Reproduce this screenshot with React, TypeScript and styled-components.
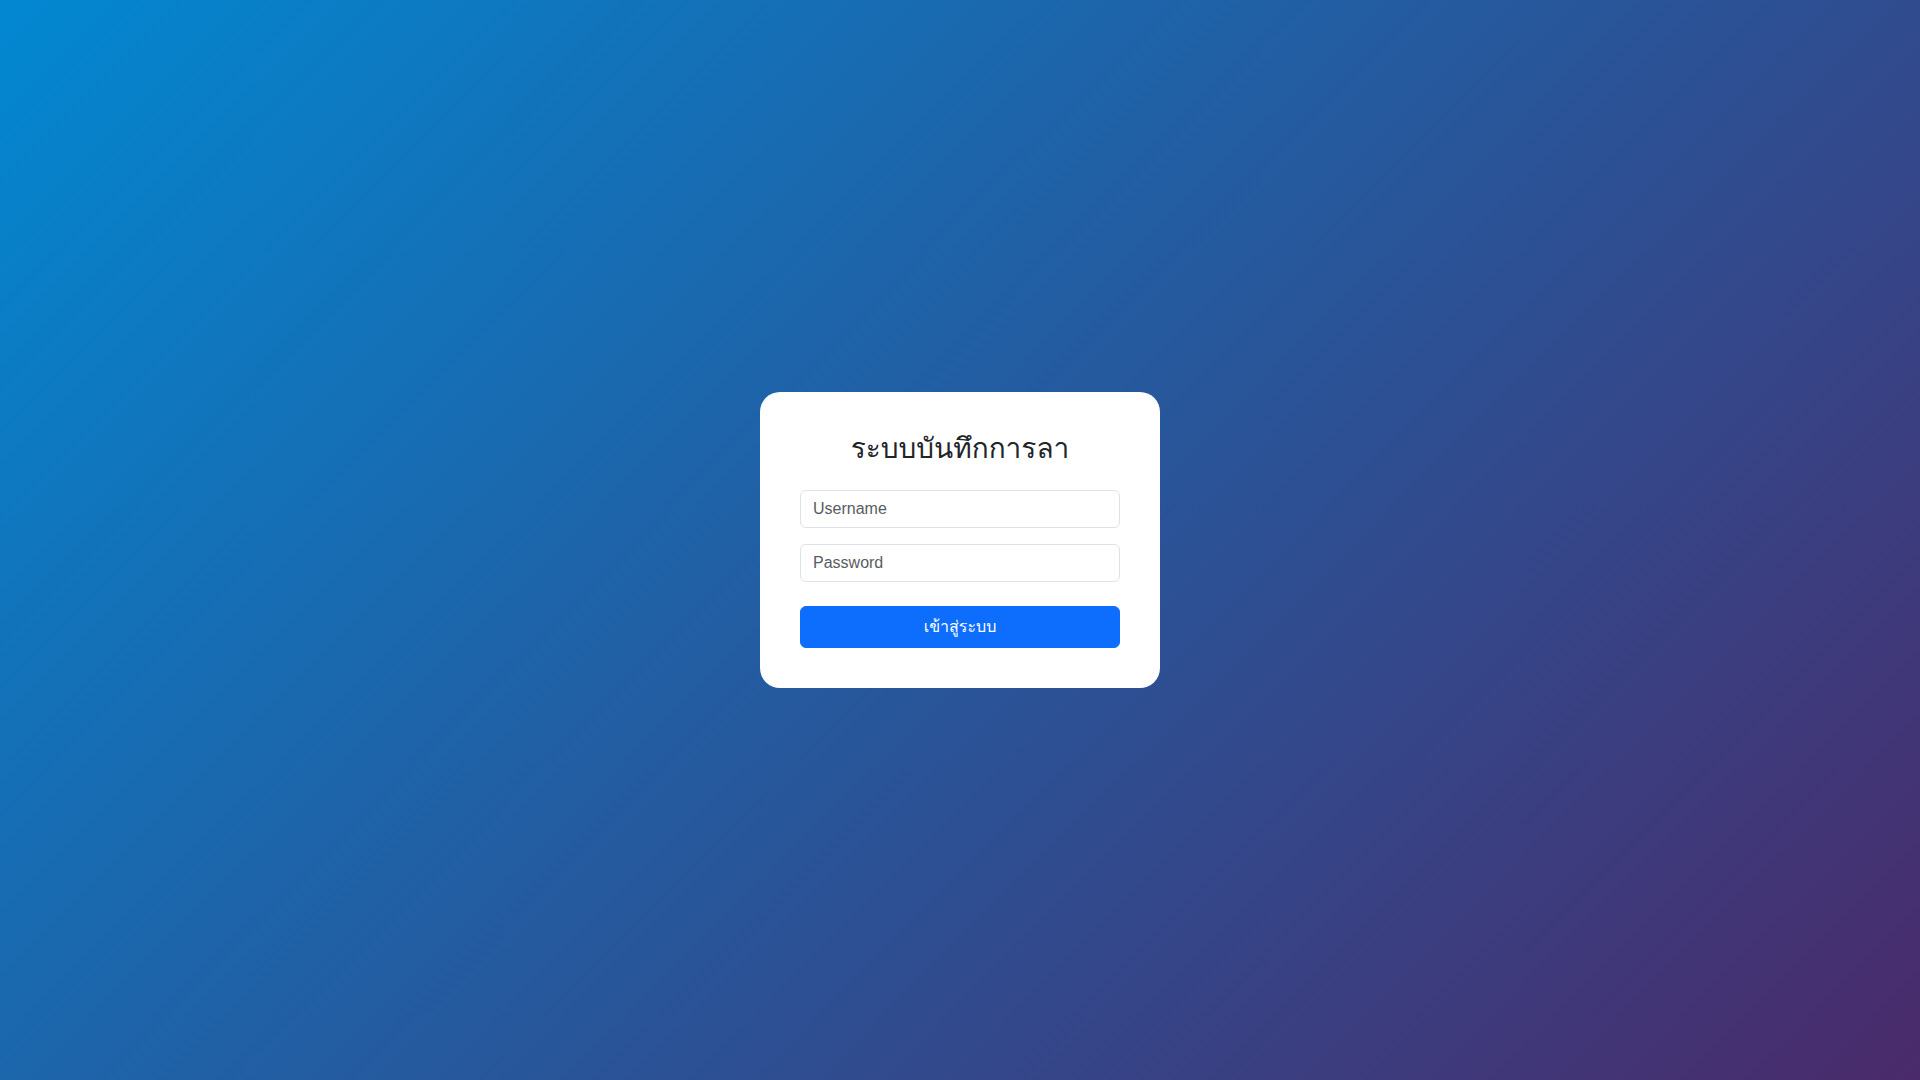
import React from "react";
import styled, { createGlobalStyle } from "styled-components";

const GlobalStyle = createGlobalStyle`
  *, *::before, *::after { box-sizing: border-box; }
  html, body, #root { height: 100%; }
  body {
    margin: 0;
    font-family: "Liberation Sans", Loma, Garuda, Waree, Umpush, "DejaVu Sans", sans-serif;
    color: #212529;
  }
`;

const Page = styled.div`
  min-height: 100vh;
  display: flex;
  align-items: center;
  justify-content: center;
  background: linear-gradient(135deg, #0288d1 0%, #4a2a6a 100%);
`;

const Card = styled.form`
  width: 400px;
  padding: 40px;
  background: #fff;
  border-radius: 20px;
  display: flex;
  flex-direction: column;
`;

const Title = styled.h3`
  margin: 0 0 24px;
  font-size: 28px;
  font-weight: 400;
  line-height: 1.2;
  text-align: center;
  color: #212529;
`;

const Field = styled.input`
  display: block;
  width: 100%;
  height: 38px;
  padding: 6px 12px;
  margin-bottom: 16px;
  font-family: inherit;
  font-size: 16px;
  line-height: 1.5;
  color: #212529;
  background: #fff;
  border: 1px solid #dee2e6;
  border-radius: 6px;
  outline: none;

  &::placeholder {
    color: #595c5f;
  }
`;

const Submit = styled.button`
  margin-top: 8px;
  width: 100%;
  height: 42px;
  padding: 8px 12px;
  font-family: inherit;
  font-size: 16px;
  line-height: 1.5;
  color: #fff;
  background: #0d6efd;
  border: 1px solid #0d6efd;
  border-radius: 6px;
  cursor: pointer;
`;

export default function App() {
  return (
    <>
      <GlobalStyle />
      <Page>
        <Card onSubmit={(e) => e.preventDefault()}>
          <Title>ระบบบันทึกการลา</Title>
          <Field type="text" placeholder="Username" />
          <Field type="password" placeholder="Password" />
          <Submit type="submit">เข้าสู่ระบบ</Submit>
        </Card>
      </Page>
    </>
  );
}
